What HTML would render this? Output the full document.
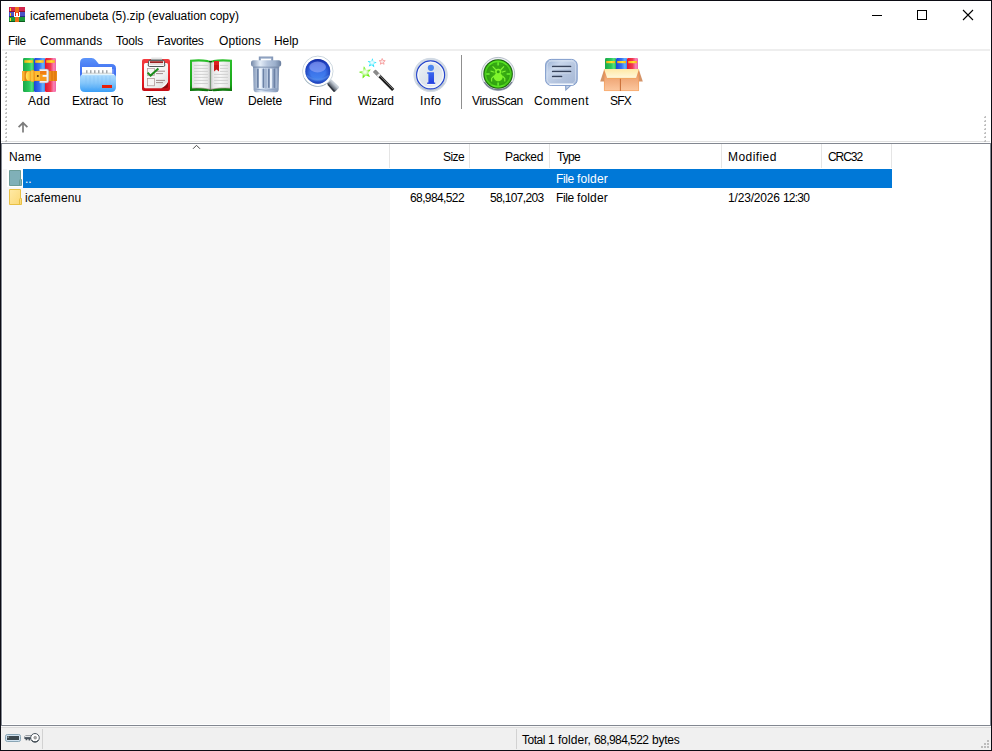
<!DOCTYPE html>
<html><head><meta charset="utf-8"><title>icafemenubeta (5).zip (evaluation copy)</title>
<style>
html,body{margin:0;padding:0;}
body{width:992px;height:751px;position:relative;overflow:hidden;background:#fff;font-family:"Liberation Sans",sans-serif;font-size:12px;color:#000;}
.a{position:absolute;}
.t{position:absolute;white-space:nowrap;line-height:14px;}
#ov{position:absolute;left:0;top:0;}
</style></head><body>
<!-- menu underline -->
<div class="a" style="left:2px;top:49px;width:988px;height:2px;background:#eeeeee;"></div>
<!-- toolbar separator -->
<div class="a" style="left:461px;top:55px;width:1px;height:54px;background:#8f8f8f;"></div>
<!-- list -->
<div class="a" style="left:1px;top:141px;width:989px;height:1px;background:#e0e0e0;"></div>
<div class="a" style="left:1px;top:143px;width:988px;height:581px;border:1px solid #828790;background:#fff;"></div>
<div class="a" style="left:3px;top:169px;width:387px;height:555px;background:#f7f7f7;"></div>
<!-- header separators -->
<div class="a" style="left:389px;top:144px;width:1px;height:24px;background:#e5e5e5;"></div>
<div class="a" style="left:469px;top:144px;width:1px;height:24px;background:#e5e5e5;"></div>
<div class="a" style="left:549px;top:144px;width:1px;height:24px;background:#e5e5e5;"></div>
<div class="a" style="left:721px;top:144px;width:1px;height:24px;background:#e5e5e5;"></div>
<div class="a" style="left:821px;top:144px;width:1px;height:24px;background:#e5e5e5;"></div>
<div class="a" style="left:891px;top:144px;width:1px;height:24px;background:#e5e5e5;"></div>
<!-- selected row -->
<div class="a" style="left:7px;top:169px;width:16px;height:18px;background:#fff;"></div>
<div class="a" style="left:23px;top:169px;width:869px;height:19px;background:#0078d7;"></div>
<!-- status bar -->
<div class="a" style="left:1px;top:726px;width:990px;height:24px;background:#f0f0f0;"></div>
<div class="a" style="left:1px;top:726px;width:990px;height:1px;background:#f8f8f8;"></div>
<div class="a" style="left:1px;top:727px;width:990px;height:1px;background:#dcdcdc;"></div>
<div class="a" style="left:42px;top:729px;width:1px;height:20px;background:#d2d2d2;"></div>
<div class="a" style="left:516px;top:729px;width:1px;height:20px;background:#d2d2d2;"></div>
<div class="t" style="left:30px;top:9px;letter-spacing:-0.03px;">icafemenubeta (5).zip (evaluation copy)</div>
<div class="t" style="left:8px;top:34px;letter-spacing:-0.41px;">File</div>
<div class="t" style="left:40px;top:34px;letter-spacing:0.12px;">Commands</div>
<div class="t" style="left:116px;top:34px;letter-spacing:-0.20px;">Tools</div>
<div class="t" style="left:157px;top:34px;letter-spacing:-0.31px;">Favorites</div>
<div class="t" style="left:219px;top:34px;letter-spacing:0.08px;">Options</div>
<div class="t" style="left:274px;top:34px;letter-spacing:-0.07px;">Help</div>
<div class="t" style="left:28px;top:94px;letter-spacing:0.25px;">Add</div>
<div class="t" style="left:72px;top:94px;letter-spacing:-0.20px;">Extract</div>
<div class="t" style="left:111px;top:94px;letter-spacing:-0.24px;">To</div>
<div class="t" style="left:146px;top:94px;letter-spacing:-0.67px;">Test</div>
<div class="t" style="left:198px;top:94px;letter-spacing:-0.17px;">View</div>
<div class="t" style="left:248px;top:94px;letter-spacing:-0.10px;">Delete</div>
<div class="t" style="left:309px;top:94px;letter-spacing:-0.17px;">Find</div>
<div class="t" style="left:358px;top:94px;letter-spacing:-0.26px;">Wizard</div>
<div class="t" style="left:420px;top:94px;letter-spacing:0.33px;">Info</div>
<div class="t" style="left:472px;top:94px;letter-spacing:-0.41px;">VirusScan</div>
<div class="t" style="left:534px;top:94px;letter-spacing:0.42px;">Comment</div>
<div class="t" style="left:610px;top:94px;letter-spacing:-0.80px;">SFX</div>
<div class="t" style="left:9px;top:150px;letter-spacing:0.17px;">Name</div>
<div class="t" style="left:443px;top:150px;letter-spacing:-0.59px;">Size</div>
<div class="t" style="left:505px;top:150px;letter-spacing:-0.34px;">Packed</div>
<div class="t" style="left:557px;top:150px;letter-spacing:-0.80px;">Type</div>
<div class="t" style="left:728px;top:150px;letter-spacing:0.43px;">Modified</div>
<div class="t" style="left:828px;top:150px;letter-spacing:-1.05px;">CRC32</div>
<div class="t" style="left:25px;top:172px;color:#fff;">..</div>
<div class="t" style="left:556px;top:172px;letter-spacing:-0.41px;color:#fff;">File</div>
<div class="t" style="left:577px;top:172px;letter-spacing:0.15px;color:#fff;">folder</div>
<div class="t" style="left:25px;top:191px;letter-spacing:0.09px;">icafemenu</div>
<div class="t" style="left:410px;top:191px;letter-spacing:-0.61px;">68,984,522</div>
<div class="t" style="left:490px;top:191px;letter-spacing:-0.64px;">58,107,203</div>
<div class="t" style="left:556px;top:191px;letter-spacing:-0.41px;">File</div>
<div class="t" style="left:577px;top:191px;letter-spacing:0.15px;">folder</div>
<div class="t" style="left:728px;top:191px;letter-spacing:-0.18px;">1/23/2026</div>
<div class="t" style="left:783px;top:191px;letter-spacing:-0.80px;">12:30</div>
<div class="t" style="left:522px;top:733px;letter-spacing:-0.50px;">Total</div>
<div class="t" style="left:548px;top:733px;">1</div>
<div class="t" style="left:558px;top:733px;letter-spacing:0.04px;">folder,</div>
<div class="t" style="left:594px;top:733px;letter-spacing:-0.56px;">68,984,522</div>
<div class="t" style="left:652px;top:733px;letter-spacing:-0.24px;">bytes</div>
<svg id="ov" width="992" height="751" viewBox="0 0 992 751">
<defs>
<linearGradient id="gG" x1="0" x2="1" y1="0" y2="0"><stop offset="0" stop-color="#1aa848"/><stop offset=".55" stop-color="#2cc85c"/><stop offset=".8" stop-color="#56e084"/><stop offset="1" stop-color="#20b04c"/></linearGradient>
<linearGradient id="gB" x1="0" x2="1" y1="0" y2="0"><stop offset="0" stop-color="#1c44d8"/><stop offset=".5" stop-color="#3672f0"/><stop offset=".8" stop-color="#66b4fc"/><stop offset="1" stop-color="#3a84f2"/></linearGradient>
<linearGradient id="gR" x1="0" x2="1" y1="0" y2="0"><stop offset="0" stop-color="#e0142c"/><stop offset=".5" stop-color="#f23a50"/><stop offset=".8" stop-color="#f884b8"/><stop offset="1" stop-color="#f060a4"/></linearGradient>
<linearGradient id="gY" x1="0" x2="1" y1="0" y2="0"><stop offset="0" stop-color="#f8a818"/><stop offset=".6" stop-color="#ffe428"/><stop offset="1" stop-color="#f8b018"/></linearGradient>
<linearGradient id="gBelt" x1="0" x2="0" y1="0" y2="1"><stop offset="0" stop-color="#ffc840"/><stop offset=".45" stop-color="#f8a020"/><stop offset="1" stop-color="#e47808"/></linearGradient>
<linearGradient id="gBeltH" x1="0" x2="1" y1="0" y2="0"><stop offset="0" stop-color="#ffdc50"/><stop offset="1" stop-color="#f8a428"/></linearGradient>
<linearGradient id="gFoldB" x1="0" x2="0" y1="0" y2="1"><stop offset="0" stop-color="#5c94fa"/><stop offset=".3" stop-color="#4a7cf4"/><stop offset="1" stop-color="#3460ec"/></linearGradient>
<linearGradient id="gFoldF" x1="0" x2="0" y1="0" y2="1"><stop offset="0" stop-color="#b4defe"/><stop offset=".5" stop-color="#84c6fa"/><stop offset="1" stop-color="#3a9ef6"/></linearGradient>
<linearGradient id="gBoard" x1="0" x2="0" y1="0" y2="1"><stop offset="0" stop-color="#f43c40"/><stop offset=".7" stop-color="#e41820"/><stop offset="1" stop-color="#c40c14"/></linearGradient>
<linearGradient id="gPaper" x1="0" x2="1" y1="0" y2="1"><stop offset="0" stop-color="#ffffff"/><stop offset=".6" stop-color="#f2f2f2"/><stop offset="1" stop-color="#d8d8d8"/></linearGradient>
<linearGradient id="gClip" x1="0" x2="0" y1="0" y2="1"><stop offset="0" stop-color="#f4f4f4"/><stop offset=".35" stop-color="#8c8c8c"/><stop offset=".6" stop-color="#3c3c3c"/><stop offset="1" stop-color="#e8e8e8"/></linearGradient>
<linearGradient id="gCover" x1="0" x2="0" y1="0" y2="1"><stop offset="0" stop-color="#2cc02c"/><stop offset=".8" stop-color="#18a418"/><stop offset="1" stop-color="#0a700a"/></linearGradient>
<linearGradient id="gPgL" x1="0" x2="1" y1="0" y2="0"><stop offset="0" stop-color="#e2e2e2"/><stop offset=".5" stop-color="#f8f8f8"/><stop offset=".88" stop-color="#e6e6e6"/><stop offset="1" stop-color="#b0b0b0"/></linearGradient>
<linearGradient id="gPgR" x1="0" x2="1" y1="0" y2="0"><stop offset="0" stop-color="#bcbcbc"/><stop offset=".12" stop-color="#e6e6e6"/><stop offset=".5" stop-color="#f8f8f8"/><stop offset="1" stop-color="#e0e0e0"/></linearGradient>
<linearGradient id="gLid" x1="0" x2="1" y1="0" y2="0"><stop offset="0" stop-color="#7488a8"/><stop offset=".3" stop-color="#e4edf8"/><stop offset=".55" stop-color="#b4c4dc"/><stop offset=".8" stop-color="#9cb0cc"/><stop offset="1" stop-color="#6a7e9e"/></linearGradient>
<linearGradient id="gCan" x1="0" x2="1" y1="0" y2="0"><stop offset="0" stop-color="#8498b8"/><stop offset=".3" stop-color="#dce8f6"/><stop offset=".6" stop-color="#b8c8e0"/><stop offset="1" stop-color="#7c90b0"/></linearGradient>
<linearGradient id="gLens" x1="0" x2="0" y1="0" y2="1"><stop offset="0" stop-color="#1630a8"/><stop offset=".18" stop-color="#2c54d8"/><stop offset=".55" stop-color="#3c74ea"/><stop offset=".85" stop-color="#4484f0"/><stop offset="1" stop-color="#2c58d8"/></linearGradient>
<linearGradient id="gHandle" x1="0" x2="1" y1="1" y2="0"><stop offset="0" stop-color="#20242c"/><stop offset=".35" stop-color="#4a525e"/><stop offset=".6" stop-color="#c0c8d2"/><stop offset=".8" stop-color="#e4eaf0"/><stop offset="1" stop-color="#7c848e"/></linearGradient>
<radialGradient id="gStarG" cx=".5" cy=".5" r=".5"><stop offset="0" stop-color="#ffffff"/><stop offset=".35" stop-color="#d8fcc0"/><stop offset=".75" stop-color="#70f018"/><stop offset="1" stop-color="#5ce408"/></radialGradient>
<radialGradient id="gStarC" cx=".5" cy=".5" r=".5"><stop offset="0" stop-color="#ffffff"/><stop offset=".35" stop-color="#c8f8ff"/><stop offset=".8" stop-color="#20e4ff"/><stop offset="1" stop-color="#08d8fc"/></radialGradient>
<radialGradient id="gInfoO" cx=".5" cy=".5" r=".5"><stop offset="0" stop-color="#f4f6f8"/><stop offset=".8" stop-color="#e4eaf0"/><stop offset=".93" stop-color="#ccd6e0"/><stop offset="1" stop-color="#e8eef4"/></radialGradient>
<linearGradient id="gInfoI" x1="0" x2="1" y1="0" y2="1"><stop offset="0" stop-color="#f2f5f8"/><stop offset=".5" stop-color="#dce3ec"/><stop offset="1" stop-color="#eef2f6"/></linearGradient>
<linearGradient id="gInfoT" x1="0" x2="0" y1="0" y2="1"><stop offset="0" stop-color="#3a66ee"/><stop offset="1" stop-color="#2440e0"/></linearGradient>
<radialGradient id="gVir" cx=".5" cy=".5" r=".5"><stop offset="0" stop-color="#48c418"/><stop offset=".7" stop-color="#38ac14"/><stop offset="1" stop-color="#2c9810"/></radialGradient>
<linearGradient id="gBub" x1="0" x2="1" y1="0" y2="1"><stop offset="0" stop-color="#94acd0"/><stop offset=".3" stop-color="#c8d6ec"/><stop offset=".6" stop-color="#b4c4de"/><stop offset="1" stop-color="#a4b6d4"/></linearGradient>
<linearGradient id="gBox" x1="0" x2="0" y1="0" y2="1"><stop offset="0" stop-color="#d88450"/><stop offset=".45" stop-color="#f0a878"/><stop offset="1" stop-color="#fcc8a0"/></linearGradient>
<linearGradient id="gFlap" x1="0" x2="0" y1="0" y2="1"><stop offset="0" stop-color="#ffe8a4"/><stop offset="1" stop-color="#fff8dc"/></linearGradient>
<linearGradient id="gFy" x1="0" x2="1" y1="0" y2="1"><stop offset="0" stop-color="#ffeaa6"/><stop offset="1" stop-color="#fbd874"/></linearGradient>
<linearGradient id="gSlot" x1="0" x2="0" y1="0" y2="1"><stop offset="0" stop-color="#c86868"/><stop offset="1" stop-color="#880808"/></linearGradient>
<radialGradient id="gVig" cx=".5" cy=".5" r=".5"><stop offset=".6" stop-color="#1028a0" stop-opacity="0"/><stop offset="1" stop-color="#1028a0" stop-opacity=".6"/></radialGradient>
<linearGradient id="gSemi" x1="0" x2="1" y1="0" y2="0"><stop offset="0" stop-color="#ffe860"/><stop offset=".5" stop-color="#ffd040"/><stop offset="1" stop-color="#f4a828"/></linearGradient>
</defs>
<!-- window controls -->
<g stroke="#000" stroke-width="1" fill="none" shape-rendering="crispEdges">
<path d="M872 15.5H882"/>
<rect x="917.5" y="10.5" width="9" height="9"/>
</g>
<path d="M963 10L973 20M973 10L963 20" stroke="#000" stroke-width="1.1" fill="none"/>
<!-- app icon -->
<g shape-rendering="crispEdges">
<rect x="9" y="7" width="16" height="5" fill="#d2264e"/>
<rect x="9" y="12" width="16" height="5" fill="#4a54c6"/>
<rect x="9" y="17" width="16" height="5" fill="#1c9a3c"/>
<rect x="9" y="11" width="16" height="1" fill="#8a1030"/>
<rect x="9" y="16" width="16" height="1" fill="#2a2c86"/>
<rect x="9" y="21" width="16" height="1" fill="#0c5c1c"/>
<rect x="15" y="7" width="4" height="15" fill="#ee7018"/>
<rect x="14" y="12" width="6" height="5" fill="#ffffff"/>
<rect x="15" y="12" width="4" height="1" fill="#ee7018"/><rect x="15" y="12" width="1" height="4" fill="#e42808"/>
<rect x="18" y="12" width="1" height="4" fill="#e42808"/>
<rect x="10" y="8" width="1" height="3" fill="#ffd820"/>
<rect x="10" y="13" width="1" height="3" fill="#ffc820"/>
<rect x="10" y="18" width="1" height="3" fill="#ffd820"/>
</g>
<!-- toolbar grippers -->
<g shape-rendering="crispEdges"><rect x="5" y="52" width="2" height="2" fill="#c0c0c0"/><rect x="5" y="52" width="1" height="1" fill="#ececec"/><rect x="5" y="56" width="2" height="2" fill="#c0c0c0"/><rect x="5" y="56" width="1" height="1" fill="#ececec"/><rect x="5" y="60" width="2" height="2" fill="#c0c0c0"/><rect x="5" y="60" width="1" height="1" fill="#ececec"/><rect x="5" y="64" width="2" height="2" fill="#c0c0c0"/><rect x="5" y="64" width="1" height="1" fill="#ececec"/><rect x="5" y="68" width="2" height="2" fill="#c0c0c0"/><rect x="5" y="68" width="1" height="1" fill="#ececec"/><rect x="5" y="72" width="2" height="2" fill="#c0c0c0"/><rect x="5" y="72" width="1" height="1" fill="#ececec"/><rect x="5" y="76" width="2" height="2" fill="#c0c0c0"/><rect x="5" y="76" width="1" height="1" fill="#ececec"/><rect x="5" y="80" width="2" height="2" fill="#c0c0c0"/><rect x="5" y="80" width="1" height="1" fill="#ececec"/><rect x="5" y="84" width="2" height="2" fill="#c0c0c0"/><rect x="5" y="84" width="1" height="1" fill="#ececec"/><rect x="5" y="88" width="2" height="2" fill="#c0c0c0"/><rect x="5" y="88" width="1" height="1" fill="#ececec"/><rect x="5" y="92" width="2" height="2" fill="#c0c0c0"/><rect x="5" y="92" width="1" height="1" fill="#ececec"/><rect x="5" y="96" width="2" height="2" fill="#c0c0c0"/><rect x="5" y="96" width="1" height="1" fill="#ececec"/><rect x="5" y="100" width="2" height="2" fill="#c0c0c0"/><rect x="5" y="100" width="1" height="1" fill="#ececec"/><rect x="5" y="104" width="2" height="2" fill="#c0c0c0"/><rect x="5" y="104" width="1" height="1" fill="#ececec"/><rect x="5" y="108" width="2" height="2" fill="#c0c0c0"/><rect x="5" y="108" width="1" height="1" fill="#ececec"/><rect x="5" y="112" width="2" height="2" fill="#c0c0c0"/><rect x="5" y="112" width="1" height="1" fill="#ececec"/><rect x="5" y="116" width="2" height="2" fill="#c0c0c0"/><rect x="5" y="116" width="1" height="1" fill="#ececec"/><rect x="5" y="120" width="2" height="2" fill="#c0c0c0"/><rect x="5" y="120" width="1" height="1" fill="#ececec"/><rect x="5" y="124" width="2" height="2" fill="#c0c0c0"/><rect x="5" y="124" width="1" height="1" fill="#ececec"/><rect x="5" y="128" width="2" height="2" fill="#c0c0c0"/><rect x="5" y="128" width="1" height="1" fill="#ececec"/><rect x="5" y="132" width="2" height="2" fill="#c0c0c0"/><rect x="5" y="132" width="1" height="1" fill="#ececec"/><rect x="5" y="136" width="2" height="2" fill="#c0c0c0"/><rect x="5" y="136" width="1" height="1" fill="#ececec"/><rect x="5" y="140" width="2" height="2" fill="#c0c0c0"/><rect x="5" y="140" width="1" height="1" fill="#ececec"/><rect x="984" y="116" width="2" height="2" fill="#c0c0c0"/><rect x="984" y="116" width="1" height="1" fill="#ececec"/><rect x="984" y="120" width="2" height="2" fill="#c0c0c0"/><rect x="984" y="120" width="1" height="1" fill="#ececec"/><rect x="984" y="124" width="2" height="2" fill="#c0c0c0"/><rect x="984" y="124" width="1" height="1" fill="#ececec"/><rect x="984" y="128" width="2" height="2" fill="#c0c0c0"/><rect x="984" y="128" width="1" height="1" fill="#ececec"/><rect x="984" y="132" width="2" height="2" fill="#c0c0c0"/><rect x="984" y="132" width="1" height="1" fill="#ececec"/><rect x="984" y="136" width="2" height="2" fill="#c0c0c0"/><rect x="984" y="136" width="1" height="1" fill="#ececec"/><rect x="984" y="140" width="2" height="2" fill="#c0c0c0"/><rect x="984" y="140" width="1" height="1" fill="#ececec"/></g>
<!-- ADD -->
<g>
<rect x="23" y="58" width="11.2" height="34" rx="1.2" fill="url(#gG)"/>
<rect x="34" y="58" width="11.2" height="34" rx="1.2" fill="url(#gB)"/>
<rect x="45" y="58" width="11" height="34" rx="1.2" fill="url(#gR)"/>
<rect x="24.3" y="60.2" width="8.6" height="2.6" fill="url(#gY)"/>
<rect x="35.2" y="60.2" width="8.6" height="2.6" fill="url(#gY)"/>
<rect x="46.2" y="60.2" width="8.6" height="2.6" fill="url(#gY)"/>
<rect x="22" y="71" width="35" height="10" fill="url(#gBelt)"/>
<rect x="22" y="71" width="2.8" height="10" fill="#fbb030"/><rect x="24.6" y="71" width="6.6" height="10" fill="#de8210"/><path d="M29 71.2A3.2 4.8 0 0 0 29 80.8H31.2V71.2Z" fill="url(#gSemi)"/>
<rect x="31" y="70.3" width="3.2" height="11.4" rx=".8" fill="url(#gBeltH)" stroke="#e89018" stroke-width=".5"/>
<rect x="34.5" y="71" width="12" height="10" fill="#f89a1c"/><rect x="40" y="71" width="7" height="3" fill="#f07c14"/>
<rect x="35" y="71.3" width="5" height="9" fill="#fcbc34"/>
<rect x="49" y="71" width="8" height="10" fill="#ee8c18"/>
<rect x="51.5" y="71" width="1" height="10" fill="#d87008"/>
<rect x="54.5" y="71" width="1" height="10" fill="#d87008"/>
<circle cx="37.8" cy="75.9" r="1" fill="#5c3408"/>
<path d="M39.6 70H46.6Q47.6 70 47.6 71V81Q47.6 82 46.6 82H39.6" fill="none" stroke="#eef0f6" stroke-width="2.2"/>
<path d="M39.6 69.2H46.8Q48.6 69.2 48.6 71V81Q48.6 82.8 46.8 82.8H39.6" fill="none" stroke="#a8aab8" stroke-width=".6"/>
<rect x="42.6" y="75" width="4.4" height="1.8" fill="#f4f6fc"/>
</g>
<!-- EXTRACT -->
<g>
<path d="M80 63Q80 58 85 58H91.5Q94 58 95.6 60L98.8 64H111.5Q116 64 116 68.5V86H80Z" fill="url(#gFoldB)"/>
<rect x="82" y="67" width="30" height="8" fill="#ffffff"/>
<rect x="82" y="72.6" width="30" height="1.6" fill="#d8dcdc"/>
<g fill="#a4a8ac"><rect x="86" y="70.2" width="1.5" height="3"/><rect x="90" y="70.2" width="1.5" height="3"/><rect x="94" y="70.2" width="1.5" height="3"/><rect x="98" y="70.2" width="1.5" height="3"/><rect x="102" y="70.2" width="1.5" height="3"/><rect x="106" y="70.2" width="1.5" height="3"/></g>
<rect x="112" y="69" width="1.6" height="5" fill="#7c9cf8"/>
<path d="M80 78Q80 74 84 74H112Q116 74 116 78V87Q116 92 111 92H85Q80 92 80 87Z" fill="url(#gFoldF)"/>
<path d="M82 74.6H114" stroke="#e8f8ff" stroke-width="1"/>
<g stroke="#78bcf6" stroke-width=".7" opacity=".55"><path d="M86 76V88M90 76V88M94 76V88M98 76V88M102 76V88M106 76V88M110 76V88"/></g>
<rect x="102" y="85" width="10" height="3" fill="#e82008"/>
</g>
<!-- TEST -->
<g>
<rect x="142" y="59" width="28" height="32" rx="2" fill="url(#gBoard)"/>
<path d="M144 64.5Q144 63 145.5 63H166.5Q168 63 168 64.5V82L162 88.3H145.5Q144 88.3 144 86.8Z" fill="url(#gPaper)"/>
<path d="M168 82Q166 86 160.5 88.3H166Q168 88.3 168 86.5Z" fill="#8c0c10"/>
<path d="M168 81.5Q165 82.5 163.5 84.5Q162 86.5 160.5 88.3Q166 86.5 168 81.5Z" fill="#f4f4f4"/>
<rect x="151" y="57.8" width="11.2" height="2.6" rx=".6" fill="#f2f2f2"/>
<path d="M151.4 58.1H161.8" stroke="#d0d0d0" stroke-width=".6"/>
<path d="M150.6 60H162.6Q164 60 164.3 61.6L164.8 65Q164.9 66.5 163.4 66.5H149.6Q148.1 66.5 148.2 65L148.7 61.6Q149 60 150.6 60Z" fill="#f8f8f8" stroke="#3c4444" stroke-width=".9"/>
<rect x="150" y="60.9" width="13" height="2.2" fill="url(#gSlot)"/>
<path d="M150 60.5H163" stroke="#404848" stroke-width=".7"/>
<path d="M149.6 64.4H163.4" stroke="#d4a4a4" stroke-width=".4"/>
<rect x="147.5" y="68.4" width="7" height="7.2" fill="#f6f4f4" stroke="#b09898" stroke-width=".7"/>
<rect x="147.5" y="78.4" width="7" height="7.4" fill="#f6f4f4" stroke="#a88c8c" stroke-width=".7"/>
<g stroke="#988080" stroke-width=".9"><path d="M156 71.2H165M156 73.6H163M156 80.4H165M156 82.6H163"/></g>
<path d="M147.6 72.6L150.6 75.6L158.4 68.6" fill="none" stroke="#1c8c1c" stroke-width="2" stroke-linejoin="miter"/>
</g>
<!-- VIEW -->
<g>
<path d="M190 59.8Q200 58.8 207.5 60L210.5 61.2L213.5 60Q221 58.8 232 59.8V91Q221 90.2 213.5 91.2L210.5 90L207.5 91.2Q200 90.2 190 91Z" fill="url(#gCover)"/>
<path d="M209 60.8H212V91H209Z" fill="#0a5c0a"/>
<path d="M192 61.8Q201 60.8 210.4 62.6V89.4Q201 87.6 192 88.2Z" fill="url(#gPgL)"/>
<path d="M230 61.8Q221 60.8 210.6 62.6V89.4Q221 87.6 230 88.2Z" fill="url(#gPgR)"/>
<path d="M192 88.2Q201 87.2 210.4 89.2M230 88.2Q221 87.2 210.6 89.2" stroke="#a07878" stroke-width=".6" fill="none"/>
<g stroke="#d0d0d0" stroke-width="1"><path d="M194 65.4H208M194 68.4H208M194 71.4H208M194 74.4H208M194 77.4H208M194 80.4H208M194 83.5H208"/><path d="M220 65.4H228M220 68.4H228M220 71.4H228M214 74.4H228M214 77.4H228M214 80.4H228M214 83.5H228"/></g>
<path d="M214 61H219V71.6L216.5 69.4L214 71.6Z" fill="#c81414"/>
<path d="M214 61H219V65H214Z" fill="#dc2020"/>
</g>
<!-- DELETE -->
<g>
<path d="M259.8 61V57.4H272.2V61" fill="none" stroke="#8498b8" stroke-width="2"/>
<path d="M260.6 58.2H271.4" stroke="#b8c8e0" stroke-width=".7"/>
<rect x="251" y="60.3" width="30.2" height="6.4" rx="2.6" fill="url(#gLid)"/>
<path d="M253 66.2H279.2L278.6 90Q278.5 92.2 276 92.2H256.2Q253.7 92.2 253.6 90Z" fill="url(#gCan)"/>
<path d="M253 66.4H279.2V68H253Z" fill="#7084a4" opacity=".55"/>
<g fill="#6c82a6"><rect x="257" y="68.5" width="1.8" height="19.5" rx=".9"/><rect x="262.6" y="68.5" width="1.8" height="19.5" rx=".9"/><rect x="268" y="68.5" width="1.8" height="19.5" rx=".9"/><rect x="273.6" y="68.5" width="1.8" height="19.5" rx=".9"/></g>
<g fill="#eef4fc"><rect x="258.9" y="68.5" width="2.6" height="20" rx="1"/><rect x="269.9" y="68.5" width="2" height="20" rx="1"/></g>
<g fill="#a4b6d2"><rect x="264.5" y="68.5" width="2.4" height="20" rx="1"/><rect x="275.5" y="68.5" width="1.8" height="20" rx=".9"/></g>
<path d="M254 89Q266 91.5 278.4 89" stroke="#8ea2c2" stroke-width="1" fill="none"/>
</g>
<!-- FIND -->
<g>
<path d="M326.8 83.6L333.4 91.4Q334.3 92.3 335.2 91.5L338.8 88Q339.5 87.1 338.7 86.3L331.2 79.2Z" fill="url(#gHandle)"/>
<path d="M328 84.4L334.4 91.6" stroke="#20242c" stroke-width="1.5" opacity=".65"/>
<circle cx="317.8" cy="71.3" r="15.2" fill="#f4f8fa" stroke="#c8d4dc" stroke-width="1"/><path d="M304.5 78A15 15 0 0 0 326 83.8" stroke="#9cb0bc" stroke-width="1.2" fill="none" opacity=".8"/>
<circle cx="317.8" cy="71.3" r="13.6" fill="none" stroke="#ffffff" stroke-width="2"/>
<circle cx="317.8" cy="71.3" r="12.4" fill="url(#gLens)"/>
<circle cx="317.8" cy="71.3" r="12.4" fill="url(#gVig)"/><ellipse cx="317.6" cy="67" rx="8.4" ry="5.4" fill="#a8b4fc" opacity=".5"/>
<path d="M306.5 75.5Q317.8 84 329 75.5" stroke="#6ca0f4" stroke-width="2" fill="none" opacity=".35"/>
</g>
<!-- WIZARD -->
<g>
<path d="M374.4 70.9L393.2 90" stroke="#1c1c1c" stroke-width="3.2"/>
<path d="M374.4 70.9L378.2 74.8" stroke="#8c8c8c" stroke-width="3.2"/>
<path d="M377.9 74.5L379.6 76.2" stroke="#f0f0f0" stroke-width="3.2"/>
<path d="M380.2 76L393.4 89.4" stroke="#8c8c8c" stroke-width="1" opacity=".85"/>
<path d="M0 -1L0.27 -0.37L0.951 -0.309L0.437 0.142L0.5878 0.809L0 0.46L-0.5878 0.809L-0.437 0.142L-0.951 -0.309L-0.27 -0.37Z" transform="translate(365.2 72.6) rotate(-12) scale(6.4)" fill="url(#gStarG)"/>
<path d="M0 -1L0.27 -0.37L0.951 -0.309L0.437 0.142L0.5878 0.809L0 0.46L-0.5878 0.809L-0.437 0.142L-0.951 -0.309L-0.27 -0.37Z" transform="translate(372 63) rotate(8) scale(4.7)" fill="url(#gStarC)"/>
<path d="M0 -1L0.27 -0.37L0.951 -0.309L0.437 0.142L0.5878 0.809L0 0.46L-0.5878 0.809L-0.437 0.142L-0.951 -0.309L-0.27 -0.37Z" transform="translate(382.2 61.7) scale(3.2)" fill="#fdeaea" stroke="#f48888" stroke-width=".22"/>
</g>
<!-- INFO -->
<g>
<circle cx="430.6" cy="74.9" r="17.2" fill="url(#gInfoO)"/><circle cx="430.6" cy="74.9" r="15.8" fill="none" stroke="#d2dae4" stroke-width="2.4"/><path d="M417 83A16.6 16.6 0 0 0 444.2 83" stroke="#b8c4d0" stroke-width="1.2" fill="none"/>
<circle cx="430.6" cy="74.9" r="14" fill="url(#gInfoI)" stroke="#2444cc" stroke-width="1.2"/>
<circle cx="430.6" cy="74.9" r="12.7" fill="none" stroke="#f8fafc" stroke-width="1"/>
<circle cx="430.9" cy="67.8" r="3.1" fill="#4c86f0"/>
<path d="M427.2 72.2H434V82.4H435.2V84H427.2V82.4H428.4V73.8H427.2Z" fill="url(#gInfoT)"/>
<path d="M427.2 84.4H435.2" stroke="#ffffff" stroke-width=".8"/>
</g>
<!-- VIRUSSCAN -->
<g>
<circle cx="498.1" cy="74" r="16.6" fill="#eceef4" stroke="#b0b8c4" stroke-width=".9"/><path d="M484.4 82A16 16 0 0 0 511.8 82" stroke="#70788c" stroke-width="1.3" fill="none"/>
<circle cx="498.1" cy="74" r="14.8" fill="#1c6410"/>
<circle cx="498.1" cy="74" r="13.8" fill="url(#gVir)"/>
<circle cx="498.1" cy="74" r="12.6" fill="none" stroke="#58e422" stroke-width="1.6"/>
<g stroke="#2c960e" stroke-width=".7" opacity=".85"><path d="M486 66H510M485 68H511M485 70H511M484.6 72H511.6M484.6 74H511.6M484.6 76H511.6M485 78H511M485 80H511M486 82H510M488 84H508"/></g>
<g stroke="#6cf030" stroke-width="1.5"><path d="M498.1 62.2V65.6M498.1 82.4V85.8M486.2 74H489.6M506.6 74H510"/></g>
<g stroke="#80f434" stroke-width="1.1" fill="none"><path d="M496 70L492.6 66.4M500.6 70L504 66.4M494.4 72.2L490.6 71M501.8 72.2L505.6 71M494 76L491.6 78.4V81.4M502.4 76L504.8 78.4V81.4"/></g>
<ellipse cx="498.2" cy="77.2" rx="4.4" ry="4" fill="#80f62c"/>
<circle cx="498.2" cy="71.8" r="3.1" fill="#80f62c"/>
<circle cx="498.2" cy="71.8" r="1.5" fill="#30a012"/>
</g>
<!-- COMMENT -->
<g>
<path d="M565 85L565.3 91.2L572 85Z" fill="#88a2cc"/>
<path d="M566.2 85.4L566.4 88.8L570 85.4Z" fill="#c4d2e8"/>
<rect x="545.6" y="59.4" width="31.6" height="26" rx="5.6" fill="url(#gBub)" stroke="#809ccc" stroke-width="1"/>
<rect x="547.2" y="61" width="28.4" height="22.8" rx="4.4" fill="none" stroke="#d4e0f2" stroke-width="1" opacity=".75"/><path d="M549.4 84.3H573.4" stroke="#f6fafe" stroke-width="1.3"/>
<path d="M549 60.8H573.5" stroke="#dce6f4" stroke-width=".8" opacity=".8"/>
<g stroke="#36425a" stroke-width="1.5" stroke-linecap="round"><path d="M552.6 66.5H570.6M552.6 71.5H570.6M552.6 76.6H561.6"/></g>
<g stroke="#e4ecf8" stroke-width=".8" opacity=".9"><path d="M552.6 67.9H570.6M552.6 72.9H570.6M552.6 78H561.6"/></g>
</g>
<!-- SFX -->
<g>
<rect x="605" y="58" width="11.2" height="13" rx="1.2" fill="url(#gG)"/>
<rect x="616" y="58" width="11.2" height="13" rx="1.2" fill="url(#gB)"/>
<rect x="627" y="58" width="11" height="13" rx="1.2" fill="url(#gR)"/>
<rect x="606.2" y="61" width="8.8" height="2.2" fill="url(#gY)"/>
<rect x="617.2" y="61" width="8.8" height="2.2" fill="url(#gY)"/>
<rect x="628.2" y="61" width="8.8" height="2.2" fill="url(#gY)"/>
<path d="M604 70L600.2 81.6H604.4Z" fill="#d49468"/>
<path d="M639 70L642.8 81.6H638.6Z" fill="#d49468"/>
<rect x="604" y="69" width="35" height="22" fill="url(#gBox)"/>
<path d="M604.4 69V90.6H638.6V69" fill="none" stroke="#f49444" stroke-width=".8" opacity=".6"/>
<path d="M620.4 78V91" stroke="#c86c34" stroke-width="1"/>
<path d="M604 69H639L636 78.2H607.2Z" fill="url(#gFlap)"/>
<path d="M607.2 78.4H636" stroke="#f0a050" stroke-width=".8"/>
</g>
<!-- UP ARROW -->
<path d="M18.6 127.2L23 122.8L27.4 127.2M23 123V132.6" fill="none" stroke="#7c7c7c" stroke-width="1.7"/>
<!-- SORT CHEVRON -->
<path d="M193 148.8L196.5 145.3L200 148.8" fill="none" stroke="#484848" stroke-width="1"/>
<!-- LIST ICONS -->
<g>
<path d="M9.5 170.5H20.5V179.5H21.5V185.5H9.5Z" fill="#80b0b8" stroke="#6c9c98" stroke-width="1"/>
<path d="M19.5 185V180.5Q19.5 179.5 20.5 179.5" fill="none" stroke="#6c9c98" stroke-width="1"/>
<path d="M9.5 189.5H20.5V198.5H21.5V204.5H9.5Z" fill="url(#gFy)" stroke="#e8c044" stroke-width="1"/>
<path d="M19.5 204V199.5Q19.5 198.5 20.5 198.5" fill="none" stroke="#e8c044" stroke-width="1"/>
</g>
<!-- STATUS ICONS -->
<g>
<rect x="5.5" y="734.5" width="15" height="7" rx="1.8" fill="#d0e2f0" stroke="#88a4b4" stroke-width="1"/>
<rect x="7" y="736" width="12" height="4" fill="#3c484e"/>
<rect x="7.6" y="736.6" width="1" height="1" fill="#ffffff"/>
<path d="M24.4 737.2Q24.4 735.6 26 735.6H31.4V739H30.2V740.4H28.6V739.2H27.2V740.2H25.6V739H24.4Z" fill="#48525c"/>
<path d="M25 736.6H31" stroke="#f4f6f8" stroke-width="1"/>
<circle cx="35" cy="737.8" r="4.3" fill="#ffffff" stroke="#4c5660" stroke-width="1"/>
<path d="M31.6 740.4Q35 743.6 38.6 740.2" stroke="#2c3840" stroke-width="1" fill="none"/>
<circle cx="35.2" cy="737.7" r="1.4" fill="#a8a8a8" stroke="#787878" stroke-width=".5"/>
</g>
<!-- RESIZE GRIP -->
<g fill="#bcbcbc" shape-rendering="crispEdges">
<rect x="987" y="740" width="2" height="2"/><rect x="984" y="743" width="2" height="2"/><rect x="987" y="743" width="2" height="2"/><rect x="981" y="746" width="2" height="2"/><rect x="984" y="746" width="2" height="2"/><rect x="987" y="746" width="2" height="2"/>
</g>

</svg>
<!-- window frame -->
<div class="a" style="left:0;top:0;width:992px;height:1px;background:#0c0c14;"></div>
<div class="a" style="left:0;top:0;width:1px;height:751px;background:#0c0c14;"></div>
<div class="a" style="left:991px;top:0;width:1px;height:751px;background:#0c0c14;"></div>
<div class="a" style="left:0;top:750px;width:992px;height:1px;background:#0c0c14;"></div>
</body></html>
